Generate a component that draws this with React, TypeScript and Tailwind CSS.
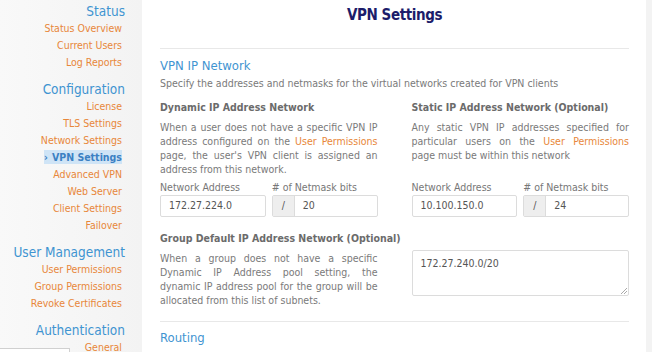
import React from "react";

const F = { fontFamily: '"DejaVu Sans Condensed", "DejaVu Sans", Verdana, sans-serif' };

function Heading({ children, first }: { children: React.ReactNode; first?: boolean }) {
  return (
    <div className={`text-[13.5px] leading-[18px] text-[#3f94d1] pr-[17px] ${first ? "" : "mt-[9px]"}`}>{children}</div>
  );
}

function Link({ children, active }: { children: React.ReactNode; active?: boolean }) {
  if (active) {
    return (
      <div className="text-[10.5px] leading-[17px] pr-[20px]">
        <span className="bg-[#cfe4f6] text-[#3b80c3] font-bold py-[1px]">
          <span className="mr-[4px]">›</span>VPN Settings
        </span>
      </div>
    );
  }
  return <div className="text-[10.5px] leading-[17px] pr-[20px] text-[#e8873a]">{children}</div>;
}

function NetInputs({ addr, bits }: { addr: string; bits: string }) {
  return (
    <div>
      <div className="grid grid-cols-2 gap-[6px] mt-[4px] text-[10.5px] leading-[14px] text-[#777]">
        <div>Network Address</div>
        <div># of Netmask bits</div>
      </div>
      <div className="grid grid-cols-2 gap-[6px] mt-[1px]">
        <div className="h-[22px] border border-[#dcdcdc] rounded-[2px] bg-white flex items-center pl-[8px] text-[10.5px] text-[#555]">
          {addr}
        </div>
        <div className="h-[22px] border border-[#dcdcdc] rounded-[2px] bg-white flex text-[10.5px] text-[#555]">
          <div className="w-[22px] bg-[#eeeeee] border-r border-[#dcdcdc] flex items-center justify-center">/</div>
          <div className="flex items-center pl-[8px]">{bits}</div>
        </div>
      </div>
    </div>
  );
}

export default function App() {
  return (
    <div style={F} className="w-[652px] h-[352px] flex overflow-hidden relative bg-white font-stretch-condensed">
      <div className="w-[142px] shrink-0 bg-gradient-to-r from-[#f9f9f9] to-[#f3f3f3] text-right pt-[2px]">
        <Heading first>Status</Heading>
        <Link>Status Overview</Link>
        <Link>Current Users</Link>
        <Link>Log Reports</Link>
        <Heading>Configuration</Heading>
        <Link>License</Link>
        <Link>TLS Settings</Link>
        <Link>Network Settings</Link>
        <Link active>VPN Settings</Link>
        <Link>Advanced VPN</Link>
        <Link>Web Server</Link>
        <Link>Client Settings</Link>
        <Link>Failover</Link>
        <Heading>User Management</Heading>
        <Link>User Permissions</Link>
        <Link>Group Permissions</Link>
        <Link>Revoke Certificates</Link>
        <Heading>Authentication</Heading>
        <Link>General</Link>
      </div>
      <div className="w-[504px] shrink-0 pl-[18px] pr-[17px]">
        <div className="text-center text-[15px] leading-[22px] font-bold text-[#1c1c6a] pt-[4px] tracking-[-0.4px]">VPN Settings</div>
        <div className="mt-[22px] border-t border-[#e8e8e8]" />
        <div className="mt-[8px] text-[13px] leading-[18px] text-[#3f94d1]">VPN IP Network</div>
        <div className="mt-[1px] text-[10.5px] leading-[14px] text-[#7a7a7a]">
          Specify the addresses and netmasks for the virtual networks created for VPN clients
        </div>
        <div className="grid grid-cols-2 gap-[34px] mt-[10px]">
          <div>
            <div className="text-[10.5px] leading-[14px] font-bold text-[#6b6b6b]">Dynamic IP Address Network</div>
            <p className="mt-[6px] text-[10.5px] leading-[14px] text-[#7a7a7a] text-justify h-[56px]">
              When a user does not have a specific VPN IP address configured on the{" "}
              <span className="text-[#e8873a]">User Permissions</span> page, the user's VPN client is assigned an address
              from this network.
            </p>
            <NetInputs addr="172.27.224.0" bits="20" />
          </div>
          <div>
            <div className="text-[10.5px] leading-[14px] font-bold text-[#6b6b6b]">Static IP Address Network (Optional)</div>
            <div className="mt-[6px] text-[10.5px] leading-[14px] text-[#7a7a7a] h-[56px]">
              <div className="text-justify [text-align-last:justify]">Any static VPN IP addresses specified for</div>
              <div className="text-justify [text-align-last:justify]">
                particular users on the <span className="text-[#e8873a]">User Permissions</span>
              </div>
              <div>page must be within this network</div>
            </div>
            <NetInputs addr="10.100.150.0" bits="24" />
          </div>
        </div>
        <div className="mt-[14px] text-[10.5px] leading-[14px] font-bold text-[#6b6b6b]">
          Group Default IP Address Network (Optional)
        </div>
        <div className="grid grid-cols-2 gap-[34px] mt-[5px]">
          <p className="pt-[1px] text-[10.5px] leading-[14px] text-[#7a7a7a] text-justify">
            When a group does not have a specific Dynamic IP Address pool setting, the dynamic IP address pool for the
            group will be allocated from this list of subnets.
          </p>
          <div className="h-[46px] border border-[#dcdcdc] rounded-[2px] bg-white relative pl-[8px] pt-[5px] text-[10.5px] leading-[14px] text-[#555]">
            172.27.240.0/20
            <svg className="absolute right-[1px] bottom-[1px]" width="7" height="7" viewBox="0 0 7 7">
              <path d="M7 1 L1 7 M7 4 L4 7" stroke="#aaa" strokeWidth="1" />
            </svg>
          </div>
        </div>
        <div className="mt-[14px] border-t border-[#e8e8e8]" />
        <div className="mt-[7px] text-[13px] leading-[18px] text-[#3f94d1]">Routing</div>
      </div>
      <div className="flex-1 bg-[#f3f3f3]" />
      <div className="absolute left-0 bottom-0 w-[70px] h-[4px] bg-white border-t border-r border-[#d0d0d0]" />
    </div>
  );
}
